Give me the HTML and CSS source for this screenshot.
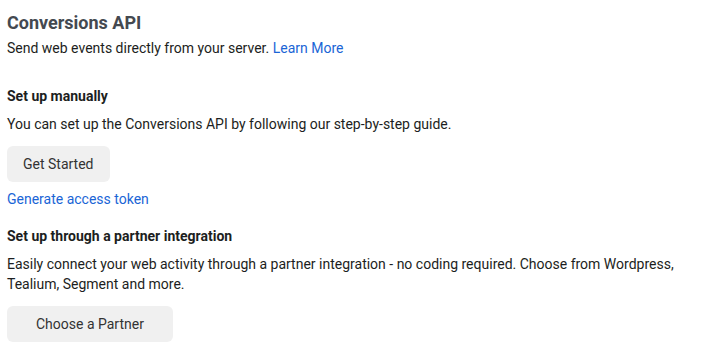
FILE: index.html
```html
<!DOCTYPE html>
<html lang="en">
<head>
    <meta charset="utf-8">
    <title>Conversions API</title>
    <link rel="stylesheet" href="styles.css">
</head>
<body>
<main class="panel">
    <h1 class="title">Conversions API</h1>
    <p class="intro">Send web events directly from your server. <a href="#">Learn More</a></p>

    <section class="setup manual">
        <h2>Set up manually</h2>
        <p>You can set up the Conversions API by following our step-by-step guide.</p>
        <button class="btn">Get Started</button>
        <a class="token" href="#">Generate access token</a>
    </section>

    <section class="setup partner">
        <h2>Set up through a partner integration</h2>
        <p>Easily connect your web activity through a partner integration - no coding required. Choose from Wordpress, Tealium, Segment and more.</p>
        <button class="btn wide">Choose a Partner</button>
    </section>
</main>
</body>
</html>
```

FILE: styles.css
```css
body {
    margin: 0;
    background: #fff;
    font-family: Roboto, "Liberation Sans", sans-serif;
    font-size: 14px;
    line-height: 20px;
    color: #1c1e21;
}
a {
    color: #1a65d6;
    text-decoration: none;
}
.panel {
    padding: 11px 7px 0;
}
.title {
    margin: 0;
    font-size: 18px;
    line-height: 24px;
    font-weight: bold;
    color: #444950;
}
.intro {
    margin: 3px 0 0;
}
.setup h2 {
    margin: 0;
    font-size: 14px;
    line-height: 20px;
    font-weight: bold;
}
.setup p {
    margin: 8px 0 0;
}
.manual {
    margin-top: 28px;
}
.partner {
    margin-top: 17px;
}
.btn {
    display: block;
    margin-top: 12px;
    height: 36px;
    padding: 0 16px;
    border: none;
    border-radius: 6px;
    background: #f0f0f0;
    font-family: inherit;
    font-size: 14px;
    color: #333;
}
.btn.wide {
    padding: 0 29px;
}
.token {
    display: block;
    margin-top: 7px;
}
```
